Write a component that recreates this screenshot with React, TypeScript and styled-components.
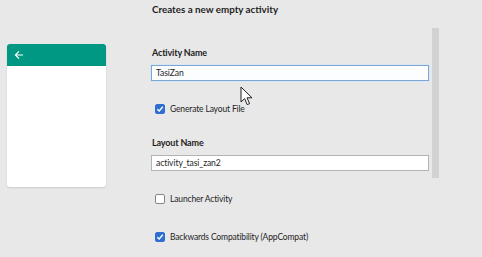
import React, { FC } from 'react';
import styled, { createGlobalStyle } from 'styled-components';

const GlobalStyle = createGlobalStyle`
    html, body {
        margin: 0;
        padding: 0;
        background: #e8e8e8;
    }
    body {
        font-family: Lato, "Noto Sans", sans-serif;
        color: #1e1e1e;
    }
`

const Page = styled.div`
    position: relative;
    width: 482px;
    height: 257px;
    overflow: hidden;
    display: flex;
    background: #e8e8e8;
`

const PreviewColumn = styled.div`
    width: 151px;
    padding: 44px 0 0 7px;
    box-sizing: border-box;
`

const PreviewCard = styled.div`
    width: 99px;
    height: 143px;
    background: #ffffff;
    border-radius: 3px;
    overflow: hidden;
    box-shadow: 0 1px 2px rgba(0, 0, 0, .12);
`

const PreviewBar = styled.div`
    height: 22px;
    background: #009882;
    display: flex;
    align-items: center;
    padding-left: 7px;
`

const FormColumn = styled.div`
    width: 278px;
    padding-top: 3px;
    display: flex;
    flex-direction: column;
`

const Title = styled.div`
    font-size: 9.8px;
    font-weight: 700;
    line-height: 12px;
    padding-left: 1px;
`

const FieldLabel = styled.div`
    margin-top: ${(p: { $top: number }) => p.$top}px;
    font-size: 9px;
    font-weight: 700;
    line-height: 12px;
    padding-left: 1px;
    letter-spacing: -0.15px;
`

type TextBoxProps = { $focused?: boolean }
const TextBox = styled.div<TextBoxProps>`
    margin-top: 6px;
    height: 16px;
    box-sizing: border-box;
    background: ${(p) => p.$focused ? '#fbfdff' : '#ffffff'};
    border: 1px solid ${(p) => p.$focused ? '#7ea6d3' : '#b4b4b4'};
    box-shadow: ${(p) => p.$focused ? '0 0 0 1px #d8e6f4' : 'none'};
    font-size: 8.6px;
    line-height: 14px;
    padding-left: 4px;
    letter-spacing: -0.1px;
`

const CheckRow = styled.label<{ $top: number }>`
    margin-top: ${(p) => p.$top}px;
    height: 12px;
    display: flex;
    align-items: center;
    gap: 5px;
    padding-left: 4px;
    font-size: 8.5px;
    letter-spacing: -0.15px;
`

const Box = styled.span<{ $checked?: boolean }>`
    width: 10px;
    height: 10px;
    box-sizing: border-box;
    border-radius: 2px;
    background: ${(p) => p.$checked ? '#2f6fd1' : '#ffffff'};
    border: 1px solid ${(p) => p.$checked ? '#2f6fd1' : '#858585'};
    display: flex;
    align-items: center;
    justify-content: center;
`

const Scrollbar = styled.div`
    margin: 28px 0 0 3px;
    width: 7px;
    height: 150px;
    background: #d2d2d2;
`

const Pointer = styled.svg`
    position: absolute;
    left: 240px;
    top: 86px;
`

const Check: FC<{ checked?: boolean; label: string; top: number }> = ({ checked, label, top }) => (
    <CheckRow $top={top}>
        <Box $checked={checked}>
            {checked && (
                <svg width="8" height="8" viewBox="0 0 8 8">
                    <path d="M1.3 4.2 L3.2 6 L6.8 1.8" fill="none" stroke="#ffffff" strokeWidth="1.4" />
                </svg>
            )}
        </Box>
        {label}
    </CheckRow>
)

export default function App() {
    return (
        <Page>
            <GlobalStyle />
            <PreviewColumn>
                <PreviewCard>
                    <PreviewBar>
                        <svg width="10" height="10" viewBox="0 0 10 10">
                            <path d="M9 5 H1.6 M5 1.4 L1.4 5 L5 8.6" fill="none" stroke="#ffffff" strokeWidth="1.2" />
                        </svg>
                    </PreviewBar>
                </PreviewCard>
            </PreviewColumn>
            <FormColumn>
                <Title>Creates a new empty activity</Title>
                <FieldLabel $top={32}>Activity Name</FieldLabel>
                <TextBox $focused>TasiZan</TextBox>
                <Check checked label="Generate Layout File" top={22} />
                <FieldLabel $top={22}>Layout Name</FieldLabel>
                <TextBox>activity_tasi_zan2</TextBox>
                <Check label="Launcher Activity" top={22} />
                <Check checked label="Backwards Compatibility (AppCompat)" top={26} />
            </FormColumn>
            <Scrollbar />
            <Pointer width="14" height="21" viewBox="0 0 14 21">
                <path d="M1 1 L1 16 L4.6 12.6 L7.2 18.6 L9.6 17.6 L7 11.8 L12 11.8 Z" fill="#ffffff" stroke="#202020" strokeWidth="1" strokeLinejoin="round" />
            </Pointer>
        </Page>
    );
}
